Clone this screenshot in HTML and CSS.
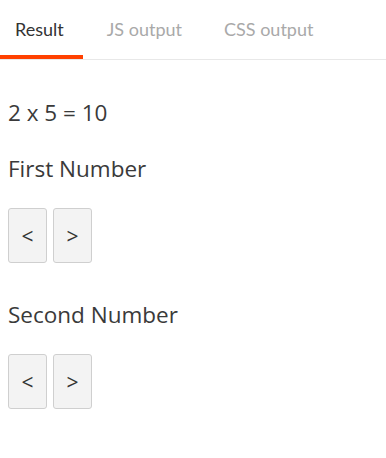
FILE: index.html
```html
<!DOCTYPE html>
<html>
<head>
<meta charset="utf-8">
<link rel="stylesheet" href="styles.css">
</head>
<body>
<nav class="tabs">
  <div class="tab tab-active">Result</div>
  <div class="tab tab-js">JS output</div>
  <div class="tab tab-css">CSS output</div>
</nav>
<main class="content">
  <p class="line line-result">2 x 5 = 10</p>
  <p class="line line-label">First Number</p>
  <div class="buttons">
    <button class="btn">&lt;</button>
    <button class="btn">&gt;</button>
  </div>
  <p class="line line-label line-second">Second Number</p>
  <div class="buttons">
    <button class="btn">&lt;</button>
    <button class="btn">&gt;</button>
  </div>
</main>
</body>
</html>
```
FILE: styles.css
```css
html, body {
  margin: 0;
  padding: 0;
  background: #fff;
}
.tabs {
  display: flex;
  height: 59px;
  border-bottom: 1px solid #e8e8e8;
  font-family: "Lato", "Open Sans", sans-serif;
  font-size: 18px;
}
.tab {
  display: flex;
  align-items: center;
  padding: 0 21px;
  padding-top: 2px;
  color: #a9a9a9;
  box-sizing: border-box;
  border-bottom: 4px solid transparent;
}
.tab-active {
  color: #333;
  padding-left: 15px;
  padding-right: 19px;
  border-bottom-color: #ff4000;
}
.tab-js {
  padding-left: 24px;
}
.content {
  padding: 0 8px;
  font-family: "Open Sans", sans-serif;
  color: #3a3a3a;
}
.line {
  margin: 0;
  font-size: 22.5px;
  line-height: 32px;
}
.line-result {
  margin-top: 37px;
}
.line-label {
  margin-top: 24px;
}
.line-second {
  margin-top: 36px;
}
.buttons {
  display: flex;
  gap: 6px;
  margin-top: 23px;
}
.btn {
  width: 39px;
  height: 55px;
  padding: 0;
  border: 1px solid #cfcfcf;
  border-radius: 3px;
  background: #f3f3f3;
  color: #333;
  font-family: "Open Sans", sans-serif;
  font-size: 21px;
}
```
